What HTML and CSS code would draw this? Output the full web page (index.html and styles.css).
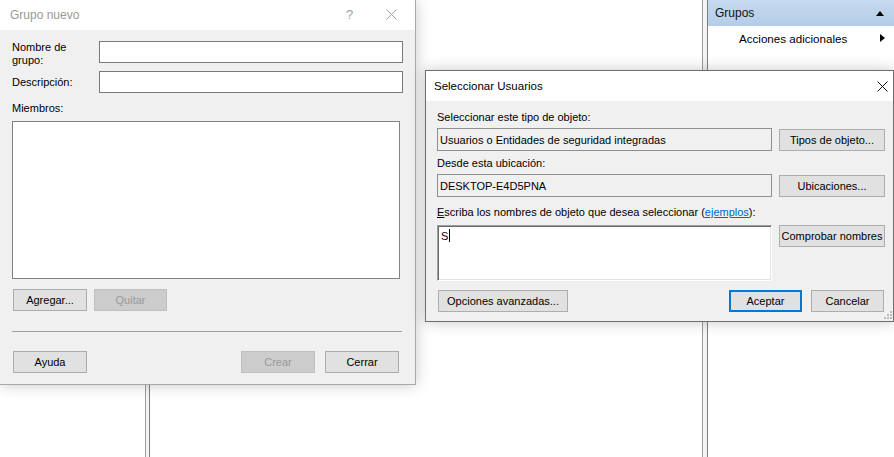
FILE: index.html
```html
<!DOCTYPE html>
<html lang="es">
<head>
<meta charset="utf-8">
<title>Grupo nuevo</title>
<link rel="stylesheet" href="styles.css">
</head>
<body>
<div class="desktop">
  <div class="mmc">
    <div class="pane pane-left"></div>
    <div class="split"></div>
    <div class="pane pane-center"></div>
    <div class="split split-wide"></div>
    <div class="actions">
      <div class="act-head"><span>Grupos</span><span class="tri-up"></span></div>
      <div class="act-item"><span>Acciones adicionales</span><span class="tri-right"></span></div>
    </div>
  </div>

  <div class="dialog dlg-group">
    <div class="titlebar inactive">
      <span class="title">Grupo nuevo</span>
      <span class="tb-help">?</span>
      <svg class="tb-close" width="11" height="11" viewBox="0 0 11 11"><path d="M0.5 0.5L10.5 10.5M10.5 0.5L0.5 10.5" stroke="#a0a0a0" stroke-width="1" fill="none"/></svg>
    </div>
    <div class="g-body">
      <div class="g-form">
        <label class="g-label">Nombre de<br>grupo:</label>
        <div class="g-input"></div>
        <label class="g-label g-center">Descripción:</label>
        <div class="g-input"></div>
      </div>
      <div class="g-members-label">Miembros:</div>
      <div class="g-list"></div>
      <div class="g-btnrow">
        <div class="btn g-btn">Agregar...</div>
        <div class="btn g-btn g-btn-q disabled">Quitar</div>
      </div>
      <div class="g-sep"></div>
      <div class="g-btnrow g-bottom">
        <div class="btn g-btn">Ayuda</div>
        <div class="spacer"></div>
        <div class="btn g-btn disabled">Crear</div>
        <div class="btn g-btn">Cerrar</div>
      </div>
    </div>
  </div>

  <div class="dialog dlg-users">
    <div class="titlebar">
      <span class="title title2">Seleccionar Usuarios</span>
      <svg class="tb-close2" width="11" height="11" viewBox="0 0 11 11"><path d="M0.5 0.5L10.5 10.5M10.5 0.5L0.5 10.5" stroke="#111" stroke-width="1" fill="none"/></svg>
    </div>
    <div class="u-body">
      <div class="u-label u-l1">Seleccionar este tipo de objeto:</div>
      <div class="u-row">
        <div class="u-box">Usuarios o Entidades de seguridad integradas</div>
        <div class="btn u-btn">Tipos de objeto...</div>
      </div>
      <div class="u-label u-l2">Desde esta ubicación:</div>
      <div class="u-row">
        <div class="u-box">DESKTOP-E4D5PNA</div>
        <div class="btn u-btn">Ubicaciones...</div>
      </div>
      <div class="u-label u-l3"><u>E</u>scriba los nombres de objeto que desea seleccionar (<a class="link">ejemplos</a>):</div>
      <div class="u-row u-row-top">
        <div class="u-text">S<span class="caret"></span></div>
        <div class="btn u-btn">Comprobar nombres</div>
      </div>
      <div class="u-actions">
        <div class="btn u-adv">Opciones avanzadas...</div>
        <div class="spacer"></div>
        <div class="btn u-ok">Aceptar</div>
        <div class="btn u-cancel">Cancelar</div>
      </div>
      <svg class="grip" width="8" height="8" viewBox="0 0 8 8">
        <rect x="6" y="0" width="2" height="2" fill="#bcbcbc"/>
        <rect x="3" y="3" width="2" height="2" fill="#bcbcbc"/>
        <rect x="6" y="3" width="2" height="2" fill="#bcbcbc"/>
        <rect x="0" y="6" width="2" height="2" fill="#bcbcbc"/>
        <rect x="3" y="6" width="2" height="2" fill="#bcbcbc"/>
        <rect x="6" y="6" width="2" height="2" fill="#bcbcbc"/>
      </svg>
    </div>
  </div>
</div>
</body>
</html>
```

FILE: styles.css
```css
* { box-sizing: border-box; }
html, body { margin: 0; padding: 0; background: #fff; }
body {
  font-family: "Liberation Sans", Arial, sans-serif;
  font-size: 11px;
  color: #000;
}
.desktop {
  position: relative;
  width: 894px;
  height: 457px;
  overflow: hidden;
  background: #fff;
}

/* background MMC console */
.mmc {
  display: flex;
  height: 457px;
}
.pane { background: #fff; }
.pane-left { width: 145px; }
.pane-center { width: 552px; }
.split {
  width: 5px;
  border-left: 1px solid #9c9c9c;
  border-right: 1px solid #7e7e7e;
  background: #f4f4f4;
}
.split-wide { width: 6px; }
.actions {
  width: 186px;
  background: #fff;
  font-size: 11.6px;
}
.act-head {
  height: 26px;
  display: flex;
  align-items: center;
  justify-content: space-between;
  padding: 0 10px 0 7px;
  background: linear-gradient(#c6daef, #b4cce7);
  color: #111;
  font-size: 12px;
}
.tri-up {
  width: 0; height: 0;
  border-left: 4px solid transparent;
  border-right: 4px solid transparent;
  border-bottom: 5px solid #000;
}
.act-item {
  height: 24px;
  display: flex;
  align-items: center;
  justify-content: space-between;
  padding: 0 9px 0 31px;
}
.tri-right {
  width: 0; height: 0;
  border-top: 4px solid transparent;
  border-bottom: 4px solid transparent;
  border-left: 5px solid #000;
}

/* dialogs */
.dialog {
  position: absolute;
  background: #f0f0f0;
  box-shadow: 0 0 14px rgba(0,0,0,0.22);
}
.titlebar {
  position: relative;
  height: 30px;
  background: #fff;
  display: flex;
  align-items: center;
}
.title { font-size: 12px; }
.inactive .title { color: #999; padding-left: 10px; }
.tb-help {
  position: absolute;
  left: 346px;
  top: 7px;
  font-size: 13px;
  color: #a0a0a0;
}
.tb-close { position: absolute; left: 386px; top: 9px; }

/* Grupo nuevo */
.dlg-group {
  left: 0;
  top: 0;
  width: 416px;
  height: 385px;
  border-right: 1px solid #a8a8a8;
  border-bottom: 1px solid #a8a8a8;
}
.g-body {
  padding: 11px 0 0 12px;
}
.g-form {
  display: grid;
  grid-template-columns: 87px 304px;
  row-gap: 4px;
}
.g-label { line-height: 13px; }
.g-center { align-self: center; }
.g-input {
  height: 22px;
  background: #fff;
  border: 1px solid #7a7a7a;
}
.g-members-label {
  margin-top: 9px;
  line-height: 13px;
}
.g-list {
  margin-top: 6px;
  width: 388px;
  height: 158px;
  background: #fff;
  border: 1px solid #828282;
}
.g-btnrow {
  display: flex;
  gap: 7px;
  margin-top: 10px;
  padding-left: 1px;
  width: 387px;
}
.btn {
  height: 22px;
  display: flex;
  align-items: center;
  justify-content: center;
  background: #e1e1e1;
  border: 1px solid #adadad;
  white-space: nowrap;
}
.g-btn { width: 74px; }
.g-btn-q { width: 73px; }
.disabled {
  background: #cccccc;
  border-color: #bfbfbf;
  color: #9a9a9a;
}
.spacer { flex: 1; }
.g-sep {
  margin-top: 20px;
  width: 390px;
  height: 1px;
  background: #a0a0a0;
}
.g-bottom { margin-top: 19px; gap: 10px; }

/* Seleccionar Usuarios */
.dlg-users {
  left: 425px;
  top: 70px;
  width: 469px;
  height: 252px;
  border: 1px solid #6e6e6e;
}
.title2 { padding-left: 8px; font-size: 11.5px; color: #000; }
.tb-close2 { position: absolute; left: 451px; top: 10px; }
.u-body {
  position: relative;
  height: 220px;
  padding: 9px 0 0 11px;
}
.u-label { line-height: 15px; }
.u-l1 { margin-bottom: 3px; }
.u-l2 { margin-top: 5px; margin-bottom: 3px; }
.u-l3 { margin-top: 8px; margin-bottom: 5px; }
.link { color: #0066cc; text-decoration: underline; }
.u-row {
  display: flex;
  align-items: center;
  gap: 7px;
}
.u-row-top { align-items: flex-start; }
.u-box {
  width: 335px;
  height: 23px;
  border: 1px solid #8f8f8f;
  background: #f0f0f0;
  padding: 0 0 0 2px;
  display: flex;
  align-items: center;
}
.u-btn { width: 106px; }
.u-text {
  width: 335px;
  height: 56px;
  background: #fff;
  border-top: 1px solid #a0a0a0;
  border-left: 1px solid #a0a0a0;
  border-right: 1px solid #fff;
  border-bottom: 1px solid #fff;
  box-shadow: inset 1px 1px 0 #696969, inset -1px -1px 0 #e3e3e3;
  padding: 3px 0 0 3px;
  line-height: 14px;
}
.caret {
  display: inline-block;
  width: 1px;
  height: 13px;
  background: #000;
  vertical-align: -2px;
  margin-left: 1px;
}
.u-actions {
  display: flex;
  gap: 8px;
  margin-top: 9px;
  padding-left: 1px;
  width: 447px;
}
.u-adv { width: 130px; }
.u-ok {
  width: 73px;
  border: 2px solid #0078d7;
}
.u-cancel { width: 73px; margin-left: 1px; }
.grip { position: absolute; right: 1px; bottom: 2px; }
```
